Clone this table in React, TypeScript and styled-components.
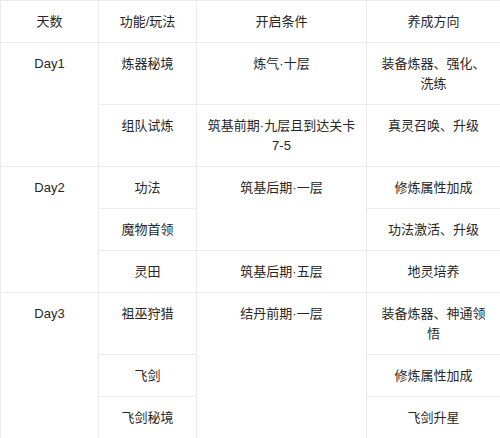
import React from "react";
import styled, { createGlobalStyle } from "styled-components";

const Global = createGlobalStyle`
  html, body { margin: 0; padding: 0; background: #ffffff; }
  body { font-family: "Liberation Sans", "Noto Sans CJK SC", sans-serif; }
`;

const Table = styled.table`
  width: 500px;
  table-layout: fixed;
  border-collapse: collapse;
  font-size: 13px;
  line-height: 20px;
  color: #262626;
`;

const Cell = styled.td`
  border: 1px solid #ebebeb;
  padding: 11px 10px 10px;
  text-align: center;
  vertical-align: top;
  word-break: break-all;
  font-weight: normal;
`;

const HeadCell = styled(Cell).attrs({ as: "th" })``;

type Row = { feature: string; cond?: string; condSpan?: number; dir?: string; dirSpan?: number };
type Day = { day: string; rows: Row[] };

const data: Day[] = [
  {
    day: "Day1",
    rows: [
      { feature: "炼器秘境", cond: "炼气·十层", dir: "装备炼器、强化、洗练" },
      { feature: "组队试炼", cond: "筑基前期·九层且到达关卡7-5", dir: "真灵召唤、升级" },
    ],
  },
  {
    day: "Day2",
    rows: [
      { feature: "功法", cond: "筑基后期·一层", condSpan: 2, dir: "修炼属性加成" },
      { feature: "魔物首领", dir: "功法激活、升级" },
      { feature: "灵田", cond: "筑基后期·五层", dir: "地灵培养" },
    ],
  },
  {
    day: "Day3",
    rows: [
      { feature: "祖巫狩猎", cond: "结丹前期·一层", condSpan: 3, dir: "装备炼器、神通领悟" },
      { feature: "飞剑", dir: "修炼属性加成" },
      { feature: "飞剑秘境", dir: "飞剑升星" },
    ],
  },
];

export default function App() {
  return (
    <>
      <Global />
      <Table>
        <colgroup>
          <col style={{ width: 98 }} />
          <col style={{ width: 98 }} />
          <col style={{ width: 170 }} />
          <col style={{ width: 134 }} />
        </colgroup>
        <thead>
          <tr>
            <HeadCell>天数</HeadCell>
            <HeadCell>功能/玩法</HeadCell>
            <HeadCell>开启条件</HeadCell>
            <HeadCell>养成方向</HeadCell>
          </tr>
        </thead>
        <tbody>
          {data.map((d) =>
            d.rows.map((r, i) => (
              <tr key={d.day + i}>
                {i === 0 && <Cell rowSpan={d.rows.length}>{d.day}</Cell>}
                <Cell>{r.feature}</Cell>
                {r.cond !== undefined && <Cell rowSpan={r.condSpan ?? 1}>{r.cond}</Cell>}
                {r.dir !== undefined && <Cell rowSpan={r.dirSpan ?? 1}>{r.dir}</Cell>}
              </tr>
            ))
          )}
        </tbody>
      </Table>
    </>
  );
}
